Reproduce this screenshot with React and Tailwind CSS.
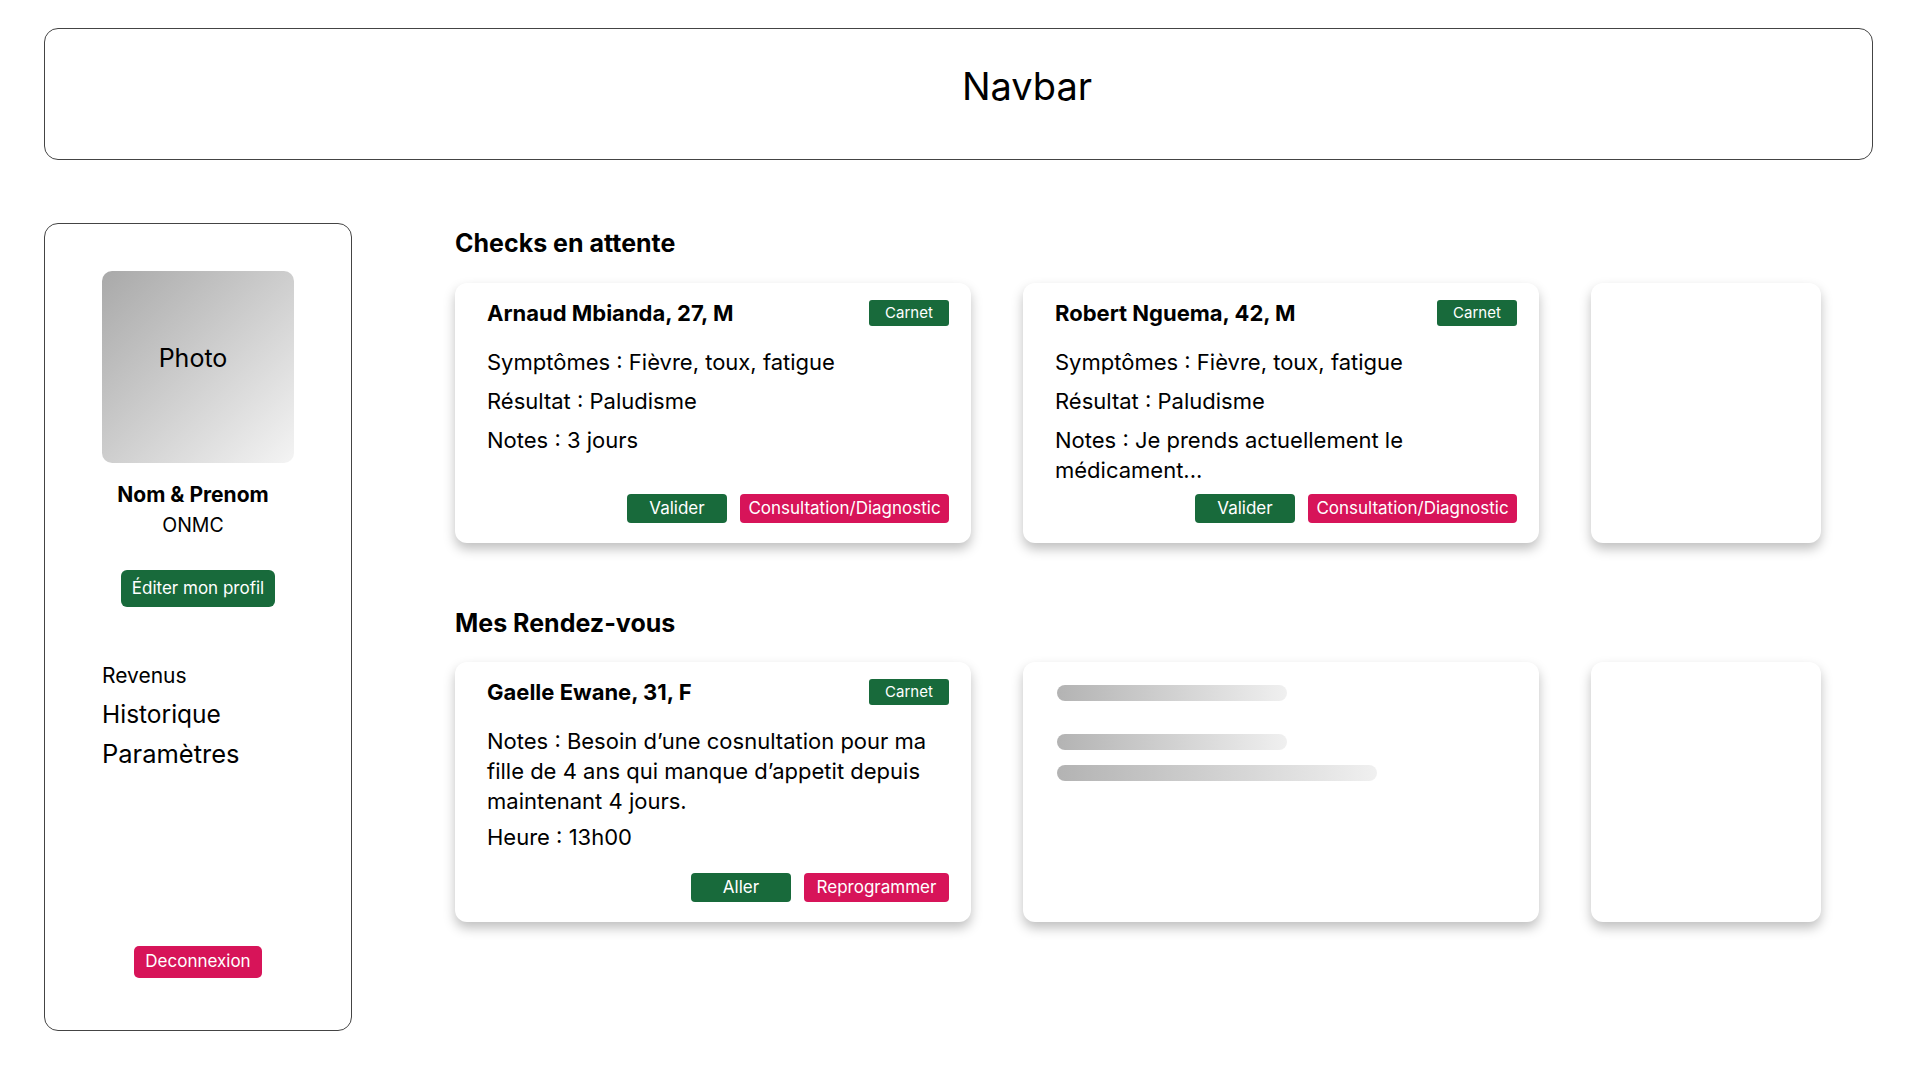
import React from 'react';

function Carnet() {
  return (
    <span className="w-[80px] h-[26px] rounded-[3px] bg-[#186a3b] text-white text-[15px] flex items-center justify-center">
      Carnet
    </span>
  );
}

function Card({ name, children, actions, gap }) {
  return (
    <div className="w-[516px] h-[260px] rounded-[12px] bg-white shadow-[0_6px_12px_rgba(0,0,0,0.25)] pl-[32px] pr-[22px] pt-[16px] pb-[20px] flex flex-col">
      <div className="h-[28px] flex items-center justify-between">
        <span className="text-[22px] font-bold leading-[28px]">{name}</span>
        <Carnet />
      </div>
      <div className={gap}>{children}</div>
      <div className="mt-auto flex justify-end gap-[13px]">{actions}</div>
    </div>
  );
}

function GreenBtn({ children }) {
  return (
    <button className="w-[100px] h-[29px] rounded-[4px] bg-[#186a3b] text-white text-[17px] flex items-center justify-center">
      {children}
    </button>
  );
}

function PinkBtn({ children, w }) {
  return (
    <button className={`${w} h-[29px] rounded-[4px] bg-[#d71459] text-white text-[17px] whitespace-nowrap flex items-center justify-center`}>
      {children}
    </button>
  );
}

export default function App() {
  return (
    <div className="min-h-screen bg-white text-black font-['Inter',sans-serif] px-[44px] pt-[28px]">
      {/* navbar placeholder */}
      <header className="w-[1829px] h-[132px] rounded-[14px] border border-[#444] flex items-center justify-center pl-[137px] pb-[16px]">
        <span className="text-[38px]">Navbar</span>
      </header>

      <div className="flex mt-[63px]">
        {/* sidebar */}
        <aside className="w-[308px] h-[808px] rounded-[14px] border border-[#444] flex flex-col items-center pt-[47px]">
          <div className="w-[192px] h-[192px] rounded-[10px] bg-linear-to-br from-[#a9a9a9] to-[#f4f4f4] flex items-center justify-center pr-[10px] pb-[16px]">
            <span className="text-[25px]">Photo</span>
          </div>
          <div className="mt-[18px] pr-[10px] text-[21px] font-bold leading-[28px]">Nom &amp; Prenom</div>
          <div className="mt-[3px] pr-[10px] text-[19.5px] leading-[26px]">ONMC</div>
          <button className="mt-[32px] w-[154px] h-[37px] rounded-[6px] bg-[#186a3b] text-white text-[17px]">
            Éditer mon profil
          </button>
          <nav className="self-start ml-[57px] mt-[54px] flex flex-col">
            <a className="text-[21px] leading-[30px]">Revenus</a>
            <a className="mt-[4px] text-[24.5px] leading-[39px]">Historique</a>
            <a className="text-[25.5px] leading-[39px]">Paramètres</a>
          </nav>
          <button className="mt-auto mb-[52px] w-[128px] h-[32px] rounded-[5px] bg-[#d71459] text-white text-[17px]">
            Deconnexion
          </button>
        </aside>

        <main className="ml-[103px] pt-[4px] flex flex-col">
          <h2 className="text-[25px] font-bold leading-[32px]">Checks en attente</h2>
          <div className="mt-[24px] flex gap-[52px]">
            <Card
              name="Arnaud Mbianda, 27, M"
              gap="mt-[20px] flex flex-col gap-[9px] text-[22px] leading-[30px]"
              actions={<><GreenBtn>Valider</GreenBtn><PinkBtn w="w-[209px]">Consultation/Diagnostic</PinkBtn></>}
            >
              <p>Symptômes : Fièvre, toux, fatigue</p>
              <p>Résultat : Paludisme</p>
              <p>Notes : 3 jours</p>
            </Card>
            <Card
              name="Robert Nguema, 42, M"
              gap="mt-[20px] flex flex-col gap-[9px] text-[22px] leading-[30px]"
              actions={<><GreenBtn>Valider</GreenBtn><PinkBtn w="w-[209px]">Consultation/Diagnostic</PinkBtn></>}
            >
              <p>Symptômes : Fièvre, toux, fatigue</p>
              <p>Résultat : Paludisme</p>
              <p className="whitespace-nowrap">Notes : Je prends actuellement le<br />médicament...</p>
            </Card>
            <div className="w-[230px] h-[260px] rounded-[12px] bg-white shadow-[0_6px_12px_rgba(0,0,0,0.25)]" />
          </div>

          <h2 className="mt-[64px] text-[25px] font-bold leading-[32px]">Mes Rendez-vous</h2>
          <div className="mt-[23px] flex gap-[52px]">
            <Card
              name="Gaelle Ewane, 31, F"
              gap="mt-[20px] flex flex-col gap-[6px] text-[22px] leading-[30px]"
              actions={<><GreenBtn>Aller</GreenBtn><PinkBtn w="w-[145px]">Reprogrammer</PinkBtn></>}
            >
              <p className="whitespace-nowrap">
                Notes : Besoin d’une cosnultation pour ma<br />
                fille de 4 ans qui manque d’appetit depuis<br />
                maintenant 4 jours.
              </p>
              <p>Heure : 13h00</p>
            </Card>
            <div className="w-[516px] h-[260px] rounded-[12px] bg-white shadow-[0_6px_12px_rgba(0,0,0,0.25)] pl-[34px] pt-[23px] flex flex-col">
              <div className="w-[230px] h-[16px] rounded-full bg-linear-to-r from-[#b3b3b3] to-[#f0f0f0]" />
              <div className="mt-[33px] w-[230px] h-[16px] rounded-full bg-linear-to-r from-[#b3b3b3] to-[#f0f0f0]" />
              <div className="mt-[15px] w-[320px] h-[16px] rounded-full bg-linear-to-r from-[#b3b3b3] to-[#f0f0f0]" />
            </div>
            <div className="w-[230px] h-[260px] rounded-[12px] bg-white shadow-[0_6px_12px_rgba(0,0,0,0.25)]" />
          </div>
        </main>
      </div>
    </div>
  );
}
